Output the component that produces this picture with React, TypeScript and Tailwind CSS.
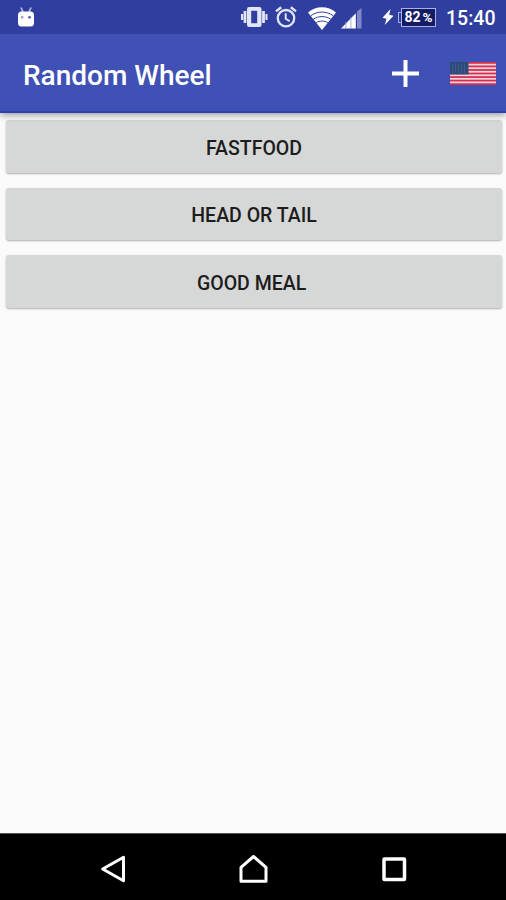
import { useState } from 'react';

type Wheel = { id: number; name: string };

const initialWheels: Wheel[] = [
  { id: 1, name: 'Fastfood' },
  { id: 2, name: 'Head or tail' },
  { id: 3, name: 'Good meal\u00a0' },
];

function DroidIcon() {
  return (
    <svg width="18" height="20" viewBox="0 0 18 20" className="shrink-0">
      <path d="M4 0.500l2 4.500M14 0.500l-2 4.500" stroke="#b3bbe8" strokeWidth="1.700" />
      <rect x="1" y="4.500" width="16" height="15" rx="3.500" fill="#fff" />
      <rect x="4" y="9.300" width="2.400" height="2" fill="#9a8fac" />
      <rect x="11.300" y="9.300" width="2.400" height="2" fill="#303f9f" />
    </svg>
  );
}

function VibrateIcon() {
  return (
    <svg width="27" height="20" viewBox="0 0 27 20" fill="#e2e5f6" className="shrink-0">
      <path
        fillRule="evenodd"
        d="M8 0h10.500a2 2 0 0 1 2 2v16a2 2 0 0 1-2 2H8a2 2 0 0 1-2-2V2a2 2 0 0 1 2-2zM10.200 3.800v12.400h6V3.800z"
      />
      <path d="M2.600 4h2.800v12H2.600zM0 7h2.100v6H0zM21.100 4h2.800v12h-2.800zM24.400 7h2.100v6h-2.100z" />
    </svg>
  );
}

function AlarmIcon() {
  return (
    <svg width="22" height="22" viewBox="0 0 22 22" fill="none" stroke="#e2e5f6" className="shrink-0">
      <circle cx="11" cy="12.200" r="8.200" strokeWidth="2.300" />
      <path d="M10.700 7.200v5.500l4 2.500" strokeWidth="1.900" />
      <path d="M1 5.400L6.200 1.200M21 5.400L15.800 1.200" strokeWidth="2.400" />
    </svg>
  );
}

function WifiIcon() {
  return (
    <svg width="28" height="23" viewBox="0 0 28 23" className="shrink-0">
      <path d="M0 5.500C8-1.500 20-1.500 28 5.500L14 23z" fill="#fff" />
      <g fill="none" stroke="#303f9f" strokeWidth="1">
        <path d="M3 8.600c6.500-4.700 15.500-4.700 22 0" />
        <path d="M5.300 12.200c5-3.500 12.400-3.500 17.400 0" />
        <path d="M8.200 15.800c3.300-2.300 8.300-2.300 11.600 0" />
      </g>
    </svg>
  );
}

function SignalIcon() {
  return (
    <svg width="21" height="21" viewBox="0 0 21 21" className="shrink-0">
      <path d="M0 20.500L14.800 5.200v15.300z" fill="#fff" />
      <path d="M4.900 14v7M9.900 9v12" stroke="#8f99d2" strokeWidth="0.800" />
      <path d="M16 20.500V3.500L20.500 0v20.500z" fill="#7f89c8" />
    </svg>
  );
}

function BoltIcon() {
  return (
    <svg width="12" height="16" viewBox="0 0 12 16" className="shrink-0">
      <path d="M8.500 0L0.500 8.800l4 1L2.800 16 11.500 6.800l-4.300-1z" fill="#fff" />
    </svg>
  );
}

function Battery({ level }: { level: number }) {
  return (
    <div className="flex items-center">
      <div className="h-[11px] w-[3px] border border-r-0 border-[#a9b1e0]" />
      <div className="flex h-[19px] w-[35px] items-baseline justify-center border border-[#a9b1e0] bg-[#141c66] leading-[17px] font-bold whitespace-nowrap">
        <span className="text-[14px]">{level}</span>
        <span className="ml-[2px] text-[13.5px]">%</span>
      </div>
    </div>
  );
}

function UsFlag() {
  return (
    <svg width="46" height="23" viewBox="0 0 46 23">
      <rect width="46" height="23" fill="#f3d3de" />
      {[0, 1, 2, 3, 4, 5, 6].map((i) => (
        <rect key={i} y={i * 3.54} width="46" height="1.77" fill="#d4304f" />
      ))}
      <rect width="18.500" height="12.400" fill="#2c4a7c" />
      {[2.5, 5.5, 8.5, 11.5, 14.5].map((x) => (
        <path key={x} d={`M${x} 1.500v10`} stroke="#3f5b88" />
      ))}
    </svg>
  );
}

function StatusBar() {
  return (
    <div className="flex h-[34px] items-center bg-[#303f9f] pr-[11px] pl-[17px]">
      <DroidIcon />
      <div className="ml-auto flex items-center">
        <VibrateIcon />
        <div className="ml-[7px]">
          <AlarmIcon />
        </div>
        <div className="mt-[3px] ml-[11px]">
          <WifiIcon />
        </div>
        <div className="mt-[3px] ml-[5px]">
          <SignalIcon />
        </div>
        <div className="ml-[20px]">
          <BoltIcon />
        </div>
        <div className="ml-[4px]">
          <Battery level={82} />
        </div>
        <span className="mt-[3px] ml-[10px] w-[49px] text-[19.5px] font-medium whitespace-nowrap">15:40</span>
      </div>
    </div>
  );
}

function NavBar() {
  return (
    <nav className="flex h-[67px] items-center border-t border-[#555] bg-black pt-1 pl-[100px]">
      <button type="button" aria-label="Back">
        <svg width="26" height="28" viewBox="0 0 26 28" fill="none" stroke="#fff" strokeWidth="3">
          <path d="M2.700 14L23.500 2.200v23.600z" strokeLinejoin="round" />
        </svg>
      </button>
      <button type="button" aria-label="Home" className="ml-[113px]">
        <svg width="29" height="29" viewBox="0 0 29 29" fill="none" stroke="#fff" strokeWidth="3">
          <path d="M2 12.300L14.500 1.500 27 12.300v14H2z" strokeLinejoin="round" />
        </svg>
      </button>
      <button type="button" aria-label="Recent apps" className="ml-[114px]">
        <svg width="25" height="25" viewBox="0 0 25 25" fill="none" stroke="#fff" strokeWidth="3.500">
          <rect x="2" y="2" width="20.500" height="20.500" rx="0.500" />
        </svg>
      </button>
    </nav>
  );
}

export default function App() {
  const [wheels, setWheels] = useState<Wheel[]>(initialWheels);

  const handleAdd = () => {
    setWheels([...wheels, { id: wheels.length + 1, name: `Wheel ${wheels.length + 1}` }]);
  };

  return (
    <div className="flex h-[900px] w-[506px] flex-col overflow-hidden bg-[#fafafa] font-[Roboto,sans-serif] text-white">
      <header className="relative z-10 shadow-[0_2px_7px_rgba(0,0,0,0.4)]">
        <StatusBar />
        <div className="flex h-[79px] items-center border-b-2 border-[#2c40ad] bg-[#3f51b5] pr-[10px] pl-[23px]">
          <h1 className="mt-[7px] text-[28px] font-medium whitespace-nowrap">Random Wheel</h1>
          <button type="button" aria-label="Add wheel" onClick={handleAdd} className="mt-[2px] ml-auto">
            <svg width="28" height="28" viewBox="0 0 28 28" stroke="#fff" strokeWidth="4">
              <path d="M13.500 0v27M0 13.500h27" />
            </svg>
          </button>
          <button type="button" aria-label="Language" className="mt-px ml-[30px]">
            <UsFlag />
          </button>
        </div>
      </header>

      <main className="flex flex-1 flex-col gap-[15px] pt-[7px] pr-[4px] pl-[6px]">
        {wheels.map((w) => (
          <button
            key={w.id}
            type="button"
            className="h-[52.5px] rounded-[3px] bg-[#d6d7d7] pt-[4px] text-[19.5px] font-medium text-[#1c1c1c] uppercase shadow-[0_1px_2px_rgba(0,0,0,0.3)]"
          >
            {w.name}
          </button>
        ))}
      </main>

      <NavBar />
    </div>
  );
}
